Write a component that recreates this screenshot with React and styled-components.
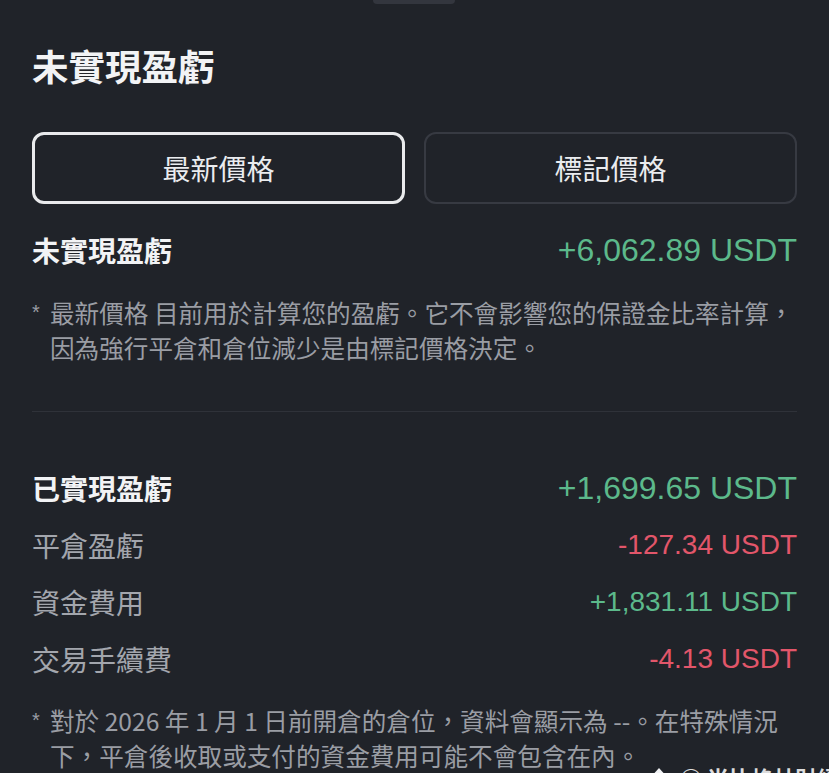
import React from "react";
import styled, { createGlobalStyle } from "styled-components";

const GlobalStyle = createGlobalStyle`
  html, body {
    margin: 0;
    padding: 0;
    background: #202329;
  }
  body {
    font-family: "Noto Sans CJK TC", "Noto Sans", "Liberation Sans", sans-serif;
    color: #eaecef;
  }
`;

const Sheet = styled.div`
  position: relative;
  width: 829px;
  height: 773px;
  overflow: hidden;
  background: #202329;
  display: flex;
  flex-direction: column;
  padding: 0 32px;
  box-sizing: border-box;
`;

const Handle = styled.div`
  position: absolute;
  top: 0;
  left: 373px;
  width: 82px;
  height: 4px;
  border-radius: 0 0 4px 4px;
  background: #33363e;
`;

const Title = styled.h1`
  margin: 44px 0 0;
  font-size: 36.5px;
  line-height: 44px;
  font-weight: 700;
  color: #f2f3f5;
`;

const Tabs = styled.div`
  display: grid;
  grid-template-columns: 1fr 1fr;
  gap: 19px;
  margin-top: 44px;
`;

const Tab = styled.button`
  height: 72px;
  box-sizing: border-box;
  border-radius: 12px;
  background: transparent;
  border: ${(p) => (p.$active ? "3px solid #e9eaec" : "2px solid #373a42")};
  color: #eaecef;
  font-family: inherit;
  font-size: 28px;
  font-weight: 400;
  display: flex;
  align-items: center;
  justify-content: center;
  padding: 0;
`;

const Row = styled.div`
  display: flex;
  justify-content: space-between;
  align-items: center;
  height: 40px;
  margin-top: ${(p) => p.$gap || 17}px;
`;

const Label = styled.span`
  font-size: 28px;
  font-weight: ${(p) => (p.$main ? 700 : 400)};
  color: ${(p) => (p.$main ? "#f2f3f5" : "#a3a6ad")};
`;

const Value = styled.span`
  font-family: "Liberation Sans", Arial, sans-serif;
  font-size: ${(p) => (p.$main ? 32 : 28)}px;
  font-weight: 400;
  color: ${(p) => (p.$tone === "up" ? "#5cb98b" : "#e2566a")};
`;

const Note = styled.div`
  display: flex;
  gap: 8px;
  margin-top: ${(p) => p.$gap}px;
  font-size: 24.6px;
  line-height: 35px;
  color: #9a9da4;
`;

const Star = styled.span`
  flex: none;
  width: 10px;
  font-family: "Liberation Sans", sans-serif;
  font-size: 20px;
`;

const Divider = styled.hr`
  margin: 46px 0 0;
  border: 0;
  height: 2px;
  background: #2f3239;
`;

const Watermark = styled.div`
  position: absolute;
  left: 648px;
  bottom: -20px;
  display: flex;
  align-items: center;
  gap: 10px;
  color: rgba(255, 255, 255, 0.85);
  font-size: 22px;
  font-weight: 700;
  white-space: nowrap;
`;

const realized = [
  { label: "平倉盈虧", value: "-127.34 USDT", tone: "down" },
  { label: "資金費用", value: "+1,831.11 USDT", tone: "up" },
  { label: "交易手續費", value: "-4.13 USDT", tone: "down" },
];

export default function App() {
  return (
    <>
      <GlobalStyle />
      <Sheet>
        <Handle />
        <Title>未實現盈虧</Title>
        <Tabs>
          <Tab $active>最新價格</Tab>
          <Tab>標記價格</Tab>
        </Tabs>
        <Row $gap={26}>
          <Label $main>未實現盈虧</Label>
          <Value $main $tone="up">
            +6,062.89 USDT
          </Value>
        </Row>
        <Note $gap={25}>
          <Star>*</Star>
          <span>
            最新價格 目前用於計算您的盈虧。它不會影響您的保證金比率計算，因為強行平倉和倉位減少是由標記價格決定。
          </span>
        </Note>
        <Divider />
        <Row $gap={56}>
          <Label $main>已實現盈虧</Label>
          <Value $main $tone="up">
            +1,699.65 USDT
          </Value>
        </Row>
        {realized.map((r) => (
          <Row key={r.label}>
            <Label>{r.label}</Label>
            <Value $tone={r.tone}>{r.value}</Value>
          </Row>
        ))}
        <Note $gap={24}>
          <Star>*</Star>
          <span>
            對於 2026 年 1 月 1 日前開倉的倉位，資料會顯示為 --。在特殊情況下，平倉後收取或支付的資金費用可能不會包含在內。
          </span>
        </Note>
        <Watermark>
          <svg width="22" height="22" viewBox="0 0 22 22">
            <path d="M11 2 L20 12 H2 Z" fill="#f2f3f5" />
          </svg>
          <span>○ 尚比格林財經</span>
        </Watermark>
      </Sheet>
    </>
  );
}
